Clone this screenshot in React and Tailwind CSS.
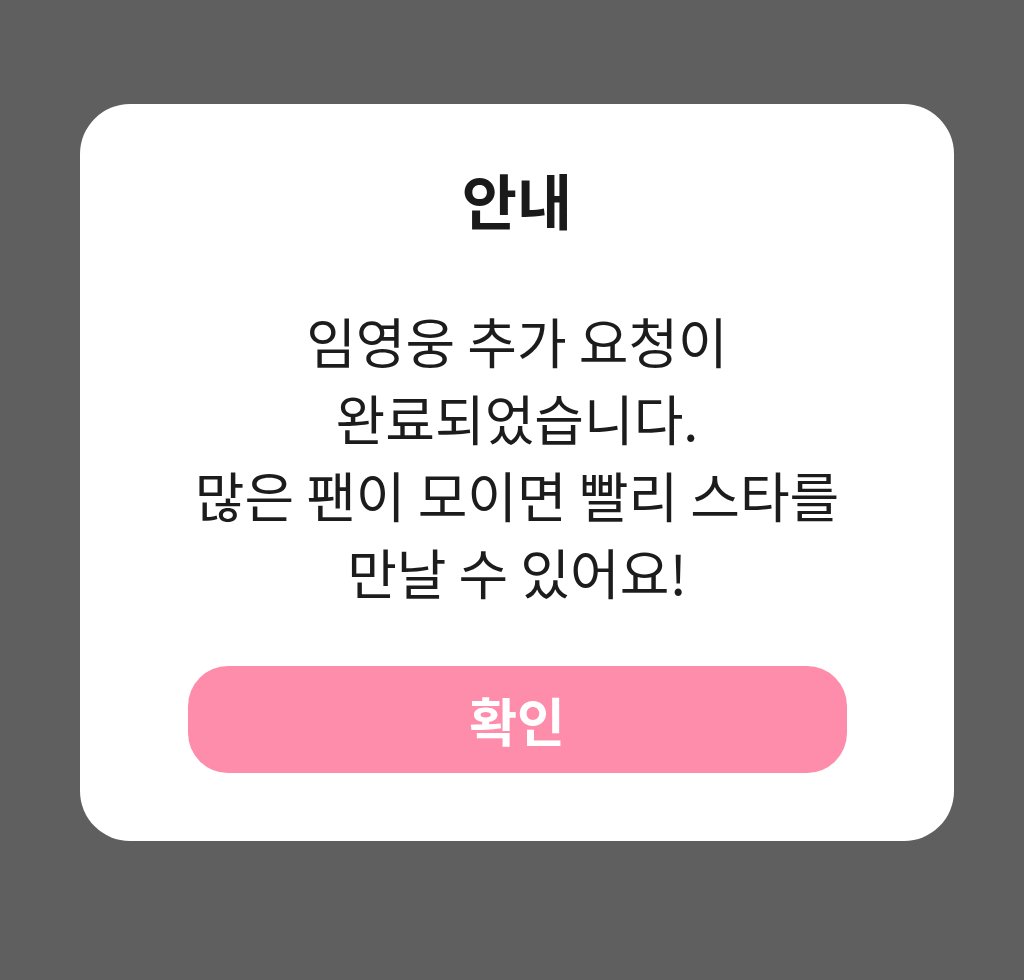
export default function App() {
  return (
    <div className="min-h-[980px] w-full bg-[#5f5f5f] pt-[104px] font-['Noto_Sans_CJK_KR',sans-serif]">
      <div className="ml-[80px] w-[874px] rounded-[50px] bg-white pb-[68px] flex flex-col items-center">
        <h1 className="mt-[59px] text-[60px] leading-[72px] font-bold text-[#1a1a1a]">안내</h1>
        <p className="mt-[67px] text-center text-[54px] leading-[77px] text-[#1c1c1c]">
          임영웅 추가 요청이
          <br />
          완료되었습니다.
          <br />
          많은 팬이 모이면 빨리 스타를
          <br />
          만날 수 있어요!
        </p>
        <button className="mt-[56px] h-[107px] w-[659px] rounded-[40px] bg-[#fe8dac] text-[52px] leading-none font-bold text-white">
          확인
        </button>
      </div>
    </div>
  );
}
